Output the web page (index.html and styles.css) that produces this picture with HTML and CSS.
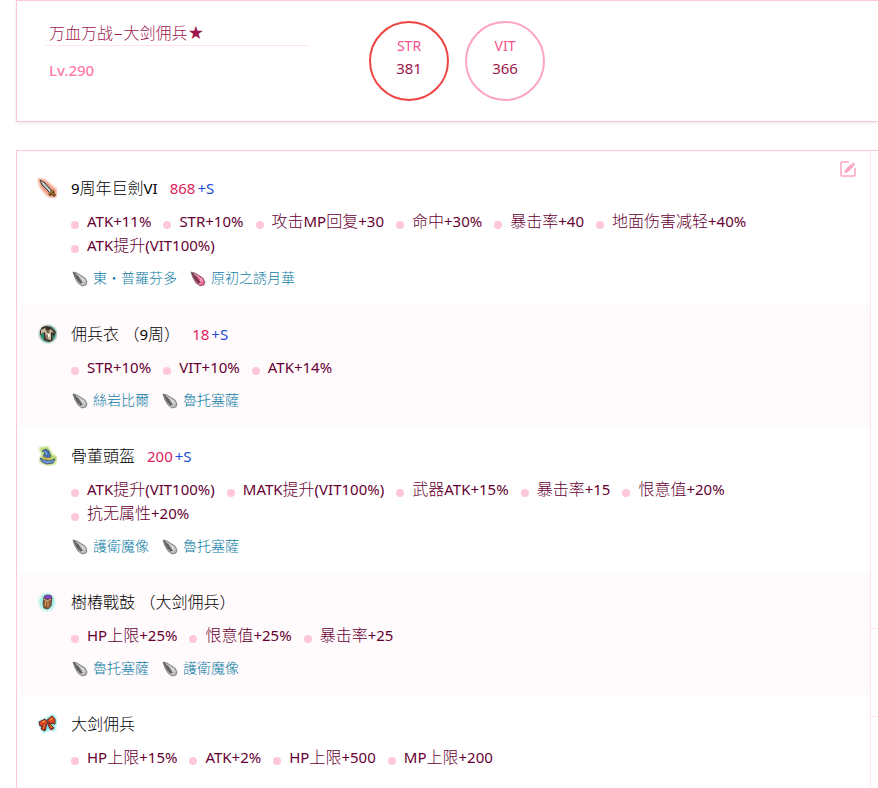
FILE: index.html
```html
<!DOCTYPE html>
<html lang="zh">
<head>
    <meta charset="UTF-8">
    <meta name="viewport" content="width=device-width, initial-scale=1.0">
    <title>万血万战-大剑佣兵★</title>
    <link rel="stylesheet" href="styles.css">
</head>
<body>
    <!-- 水晶图标 -->
    <svg class="defs" aria-hidden="true">
        <symbol id="crystal" viewBox="0 0 18 18">
            <path d="M2 3l4 1 8 5 2 4-1 3-4 1-4-3-3-5z" fill="currentColor" stroke="#666" stroke-width=".7"/>
            <path d="M2 3l5 3 2 4 3 4-2 1-4-4z" fill="#333" fill-opacity=".65"/>
            <path d="M5 5l6 4 1 4M12 9l2 4M10 15l3-1" fill="none" stroke="#fff" stroke-opacity=".6"/>
        </symbol>
    </svg>

    <header class="card header">
        <div class="profile">
            <h1 class="name">万血万战−大剑佣兵★</h1>
            <div class="level">Lv.290</div>
        </div>
        <div class="stats">
            <div class="circle main"><span class="key">STR</span><span class="val">381</span></div>
            <div class="circle"><span class="key">VIT</span><span class="val">366</span></div>
        </div>
    </header>

    <main class="card content">
        <section class="equips">
            <button class="edit" type="button" aria-label="编辑">
                <svg width="20" height="20" viewBox="0 0 20 20" fill="none" stroke="currentColor"><path d="M11 3H4a1 1 0 0 0-1 1v12a1 1 0 0 0 1 1h12a1 1 0 0 0 1-1V9" stroke-width="1.500"/><path d="M7 13.500l.5-2.500 5.500-5.500 2 2L9.500 13z" fill="currentColor"/><path d="M14.300 4.300l2 2" stroke-width="2.500"/></svg>
            </button>

            <article class="equip">
                <div class="title">
                    <svg class="icon" viewBox="0 0 20 20">
                        <path class="glow" d="M2 1l6 2 7 6 4 3v6l-5 1-4-3-6-7z" fill="#f09a80" stroke="#f09a80" stroke-width="2"/>
                        <path d="M3 2l5 3 7 8-2 2-8-8z" fill="#9ba3a1" stroke="#4a4546"/>
                        <path d="M5 4l8 9" stroke="#e4eae7"/>
                        <path d="M12 17l5-4M14 14l4 4" stroke="#5d4017" stroke-width="3"/>
                        <path d="M12 16l4-3M15 15l2 2" stroke="#d2a73c"/>
                    </svg>
                    <span><span class="en">9</span>周年巨劍<span class="en">VI</span></span>
                    <span class="base"><b>868</b><i>+S</i></span>
                </div>
                <ul class="attrs">
                    <li><span class="en">ATK+11%</span></li>
                    <li><span class="en">STR+10%</span></li>
                    <li>攻击<span class="en">MP</span>回复<span class="en">+30</span></li>
                    <li>命中<span class="en">+30%</span></li>
                    <li>暴击率<span class="en">+40</span></li>
                    <li>地面伤害减轻<span class="en">+40%</span></li>
                    <li><span class="en">ATK</span>提升<span class="en">(VIT100%)</span></li>
                </ul>
                <div class="crystals">
                    <a href="#"><svg class="gem"><use href="#crystal"/></svg>東・普羅芬多</a>
                    <a href="#"><svg class="gem red"><use href="#crystal"/></svg>原初之誘月華</a>
                </div>
            </article>

            <article class="equip">
                <div class="title">
                    <svg class="icon" viewBox="0 0 20 20">
                        <circle class="glow" cx="11" cy="10" r="8" fill="#278565" stroke="#278565"/>
                        <path d="M5 3l4-1 5 1 5 5-2 4-2-1 1 5-4 2-5-2V9l-4 2V7z" fill="#413329"/>
                        <path d="M4 6l4-2 2 3 4-2 3 4-3-1v8l-5-1-1-7-4 2z" fill="#c5b8a0"/>
                        <path d="M9 5l2 4 2-4M10 11v4" fill="none" stroke="#5c4130"/>
                        <path d="M12 10v3" stroke="#fff8e6" stroke-width="2"/>
                    </svg>
                    <span>佣兵衣 （<span class="en">9</span>周）</span>
                    <span class="base"><b>18</b><i>+S</i></span>
                </div>
                <ul class="attrs">
                    <li><span class="en">STR+10%</span></li>
                    <li><span class="en">VIT+10%</span></li>
                    <li><span class="en">ATK+14%</span></li>
                </ul>
                <div class="crystals">
                    <a href="#"><svg class="gem"><use href="#crystal"/></svg>絲岩比爾</a>
                    <a href="#"><svg class="gem"><use href="#crystal"/></svg>魯托塞薩</a>
                </div>
            </article>

            <article class="equip">
                <div class="title">
                    <svg class="icon" viewBox="0 0 20 20">
                        <path class="glow" d="M4 3l6-1 4 7 5 3-2 5-6 1-7-3 1-4 2-1z" fill="#b4d66a" stroke="#b4d66a" stroke-width="3"/>
                        <path d="M5 5l4-2 3 2 2 6-4 2-4-2 2-5z" fill="#4770ae" stroke="#3c5484" stroke-width=".7"/>
                        <path d="M3 12l4 2 5 1 6-2-2 4-6 1-5-2z" fill="#7698d2" stroke="#263a70" stroke-width=".7"/>
                        <path d="M6 11l4 2 4-1" fill="none" stroke="#d5ad36" stroke-width="1.500"/>
                        <path d="M8 5l2 4" stroke="#9ac4ec"/>
                    </svg>
                    <span>骨董頭盔</span>
                    <span class="base"><b>200</b><i>+S</i></span>
                </div>
                <ul class="attrs">
                    <li><span class="en">ATK</span>提升<span class="en">(VIT100%)</span></li>
                    <li><span class="en">MATK</span>提升<span class="en">(VIT100%)</span></li>
                    <li>武器<span class="en">ATK+15%</span></li>
                    <li>暴击率<span class="en">+15</span></li>
                    <li>恨意值<span class="en">+20%</span></li>
                    <li>抗无属性<span class="en">+20%</span></li>
                </ul>
                <div class="crystals">
                    <a href="#"><svg class="gem"><use href="#crystal"/></svg>護衛魔像</a>
                    <a href="#"><svg class="gem"><use href="#crystal"/></svg>魯托塞薩</a>
                </div>
            </article>

            <article class="equip">
                <div class="title">
                    <svg class="icon" viewBox="0 0 20 20">
                        <ellipse class="glow" cx="10" cy="10" rx="8" ry="9" fill="#a2eee5"/>
                        <path d="M7 5l4-1 4 2-1 8-3 3-4-1-1-4z" fill="#8c5b36" stroke="#4a2e31" stroke-width=".7"/>
                        <path d="M9 9l-1 5M11 10v5" stroke="#d6a568"/>
                        <ellipse cx="11" cy="5" rx="4" ry="2" fill="#8148bd" stroke="#552b75" stroke-width=".7"/>
                        <path d="M7 7l3 2 4-2" fill="none" stroke="#d8bc8c"/>
                    </svg>
                    <span>樹樁戰鼓 （大剑佣兵）</span>
                </div>
                <ul class="attrs">
                    <li><span class="en">HP</span>上限<span class="en">+25%</span></li>
                    <li>恨意值<span class="en">+25%</span></li>
                    <li>暴击率<span class="en">+25</span></li>
                </ul>
                <div class="crystals">
                    <a href="#"><svg class="gem"><use href="#crystal"/></svg>魯托塞薩</a>
                    <a href="#"><svg class="gem"><use href="#crystal"/></svg>護衛魔像</a>
                </div>
            </article>

            <article class="equip">
                <div class="title">
                    <svg class="icon" viewBox="0 0 20 20">
                        <path class="glow" d="M3 8l6-2 7-4 3 7-3 2 1 4-5-1-5 3-3-5z" fill="#73e5e5" stroke="#73e5e5" stroke-width="3"/>
                        <path d="M10 9l-2 8-4-2 3-6zM12 9l5 5-3 2-3-5z" fill="#bd291b" stroke="#70251d"/>
                        <path d="M2 8l6-3 3 4-4 3-4 0zM10 6l5-4 3 3v5l-6-1z" fill="#dc4625" stroke="#76251b"/>
                        <path d="M5 8l3-1M13 6l3-2M8 11l-2 4M13 11l2 3" stroke="#efb442"/>
                    </svg>
                    <span>大剑佣兵</span>
                </div>
                <ul class="attrs">
                    <li><span class="en">HP</span>上限<span class="en">+15%</span></li>
                    <li><span class="en">ATK+2%</span></li>
                    <li><span class="en">HP</span>上限<span class="en">+500</span></li>
                    <li><span class="en">MP</span>上限<span class="en">+200</span></li>
                </ul>
            </article>
        </section>

        <aside class="side">
            <div class="cell tall"></div>
            <div class="cell"></div>
        </aside>
    </main>
</body>
</html>
```
FILE: styles.css
```css
* {
    box-sizing: border-box;
}

body {
    margin: 0;
    padding-left: 16px;
    background-color: #fff;
    font-family: Inter, "Noto Sans CJK SC", sans-serif;
    font-size: 16px;
    font-weight: 300;
    line-height: 24px;
    color: #000;
}

.defs {
    display: none;
}

/* 卡片向右延伸到窗口边缘 */
.card {
    border: 1px solid #ffc7db;
    border-right: none;
}

/* 角色信息 */
.header {
    display: flex;
    gap: 60px;
    padding: 20px 28px;
    box-shadow: 0 1px 3px rgba(0, 0, 0, 0.1);
}

.profile {
    flex: 0 1 264px;
}

.name {
    margin: 0;
    padding-left: 4px;
    border-bottom: 1px solid #ffe4ed;
    font-size: 16px;
    font-weight: 300;
    color: #9d174d;
}

.level {
    margin-top: 12px;
    padding-left: 4px;
    color: #ff7aa8;
}

/* 英文和数字 */
.en,
.level,
.circle,
.base {
    font-family: "Noto Sans", sans-serif;
    font-size: 15px;
    font-weight: 400;
}

.en {
    line-height: 1;
}

.level {
    font-weight: 500;
}

.stats {
    display: flex;
    gap: 16px;
}

.circle {
    display: flex;
    flex-direction: column;
    align-items: center;
    width: 80px;
    height: 80px;
    padding-top: 12px;
    border: 2px solid #fda4c4;
    border-radius: 50%;
    line-height: 22px;
}

.circle.main {
    border-color: #ef4444;
}

.key {
    font-size: 14px;
    color: #f4528b;
}

.val {
    color: #9d174d;
}

/* 装备列表 */
.content {
    display: flex;
    min-height: calc(100vh - 150px);
    margin-top: 28px;
    border-bottom: none;
}

.equips {
    position: relative;
    flex: 1;
    min-width: 0;
    padding-top: 8px;
}

.edit {
    position: absolute;
    top: 8px;
    right: 12px;
    width: 20px;
    height: 20px;
    padding: 0;
    border: none;
    background: none;
    color: #fda4c4;
    cursor: pointer;
}

.edit svg {
    display: block;
}

.equip {
    padding: 16px 20px 14px;
}

.equip:nth-of-type(even) {
    background-color: #fffafc;
}

.title {
    display: flex;
    align-items: center;
    height: 26px;
}

.icon {
    width: 20px;
    height: 20px;
    margin-right: 14px;
}

.glow {
    filter: blur(1px);
}

.base {
    margin-left: 12px;
}

.base b {
    font-weight: 400;
    color: #e11d5c;
}

.base i {
    margin-left: 2px;
    font-style: normal;
    color: #1d4ed8;
}

.attrs {
    display: flex;
    flex-wrap: wrap;
    column-gap: 12px;
    margin: 8px 0 0 34px;
    padding: 0;
    list-style: none;
    color: #660033;
}

.attrs li {
    height: 24px;
    white-space: nowrap;
}

.attrs li::before {
    content: "";
    display: inline-block;
    width: 8px;
    height: 8px;
    margin-right: 8px;
    border-radius: 50%;
    background-color: #ffc7db;
    vertical-align: -2px;
}

/* 锻晶 */
.crystals {
    display: flex;
    gap: 12px;
    margin: 8px 0 0 34px;
    font-size: 14px;
    line-height: 26px;
}

.crystals a {
    display: flex;
    align-items: center;
    gap: 4px;
    color: #0e7ca5;
    text-decoration: none;
}

.gem {
    width: 18px;
    height: 18px;
    color: #b5b5b5;
}

.gem.red {
    color: #ee5283;
}

/* 右侧栏 */
.side {
    flex: 0 0 8px;
    border-left: 1px solid #ffe4ed;
}

.cell {
    height: 88px;
    border-bottom: 1px solid #ffe4ed;
}

.cell.tall {
    height: 478px;
}
```
